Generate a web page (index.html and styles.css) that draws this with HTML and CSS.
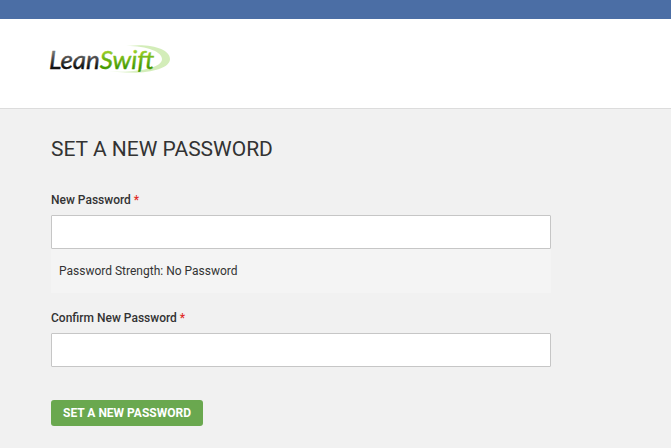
FILE: index.html
```html
<!DOCTYPE html>
<html lang="en">
<head>
<meta charset="utf-8">
<meta name="viewport" content="width=device-width, initial-scale=1">
<title>Set a New Password</title>
<link rel="stylesheet" href="styles.css">
</head>
<body>
<div class="topbar"></div>
<header class="header">
  <a class="logo" href="#" aria-label="LeanSwift">
    <svg width="124" height="36" viewBox="0 0 124 36">
      <defs>
        <linearGradient id="dark" x1="0" y1="0" x2="0" y2="1">
          <stop offset="0.2" stop-color="#858585"/>
          <stop offset="0.75" stop-color="#111"/>
        </linearGradient>
        <linearGradient id="green" x1="0" y1="0" x2="0" y2="1">
          <stop offset="0.2" stop-color="#a2d42c"/>
          <stop offset="0.75" stop-color="#459b00"/>
        </linearGradient>
        <linearGradient id="swoosh" x1="0" y1="0" x2="1" y2="0">
          <stop offset="0" stop-color="#dff2cb" stop-opacity="0.2"/>
          <stop offset="0.5" stop-color="#d3edb9"/>
          <stop offset="1" stop-color="#d3edb9"/>
        </linearGradient>
      </defs>
      <path d="M77 3C102 0 121 6 121 16C121 27 93 33 59 28C89 30 113 25 113 16C113 9 99 3 77 3Z" fill="url(#swoosh)"/>
      <text class="logo-text" x="0" y="26"><tspan fill="url(#dark)" stroke="url(#dark)">Lean</tspan><tspan fill="url(#green)" stroke="url(#green)">Swift</tspan></text>
    </svg>
  </a>
</header>
<main class="main">
  <h1 class="title">SET A NEW PASSWORD</h1>
  <form class="form">
    <div class="field">
      <label class="label" for="password">New Password <span class="required">*</span></label>
      <input class="input" id="password" type="password" required>
      <div class="strength">Password Strength: No Password</div>
    </div>
    <div class="field">
      <label class="label" for="confirm">Confirm New Password <span class="required">*</span></label>
      <input class="input" id="confirm" type="password" required>
    </div>
    <button class="submit" type="submit">SET A NEW PASSWORD</button>
  </form>
</main>
</body>
</html>
```
FILE: styles.css
```css
* {
  box-sizing: border-box;
}

body {
  margin: 0;
  background: #f1f1f1;
  color: #333;
  font-family: Roboto, "Liberation Sans", sans-serif;
  font-size: 12px;
  line-height: 16px;
}

.topbar {
  height: 19px;
  background: #4b6ea5;
}

.header {
  padding: 24px 49px 29px;
  background: #fff;
  border-bottom: 1px solid #dcdcdc;
}

.logo,
.logo svg {
  display: block;
  width: 124px;
}

.logo-text {
  font-family: Lato, "Open Sans", sans-serif;
  font-size: 26px;
  font-style: italic;
  stroke-width: 0.4;
}

.main {
  padding: 24px 51px;
}

.title {
  margin: 0 0 27px;
  font-size: 21px;
  font-weight: 400;
  line-height: 32px;
}

.form {
  max-width: 500px;
}

.field {
  margin-bottom: 17px;
}

.label {
  display: block;
  margin-bottom: 7px;
  font-weight: 500;
}

.required {
  color: #e02b27;
}

.input {
  display: block;
  width: 100%;
  height: 34px;
  padding: 0 8px;
  background: #fff;
  border: 1px solid #c6c6c6;
  border-radius: 1px;
  font: inherit;
}

.strength {
  padding: 14px 8px;
  background: #f4f4f4;
}

.submit {
  height: 26px;
  margin-top: 16px;
  padding: 0 12px;
  background: #6aa84f;
  border: 0;
  border-radius: 3px;
  color: #fff;
  font: inherit;
  font-weight: 700;
}
```
